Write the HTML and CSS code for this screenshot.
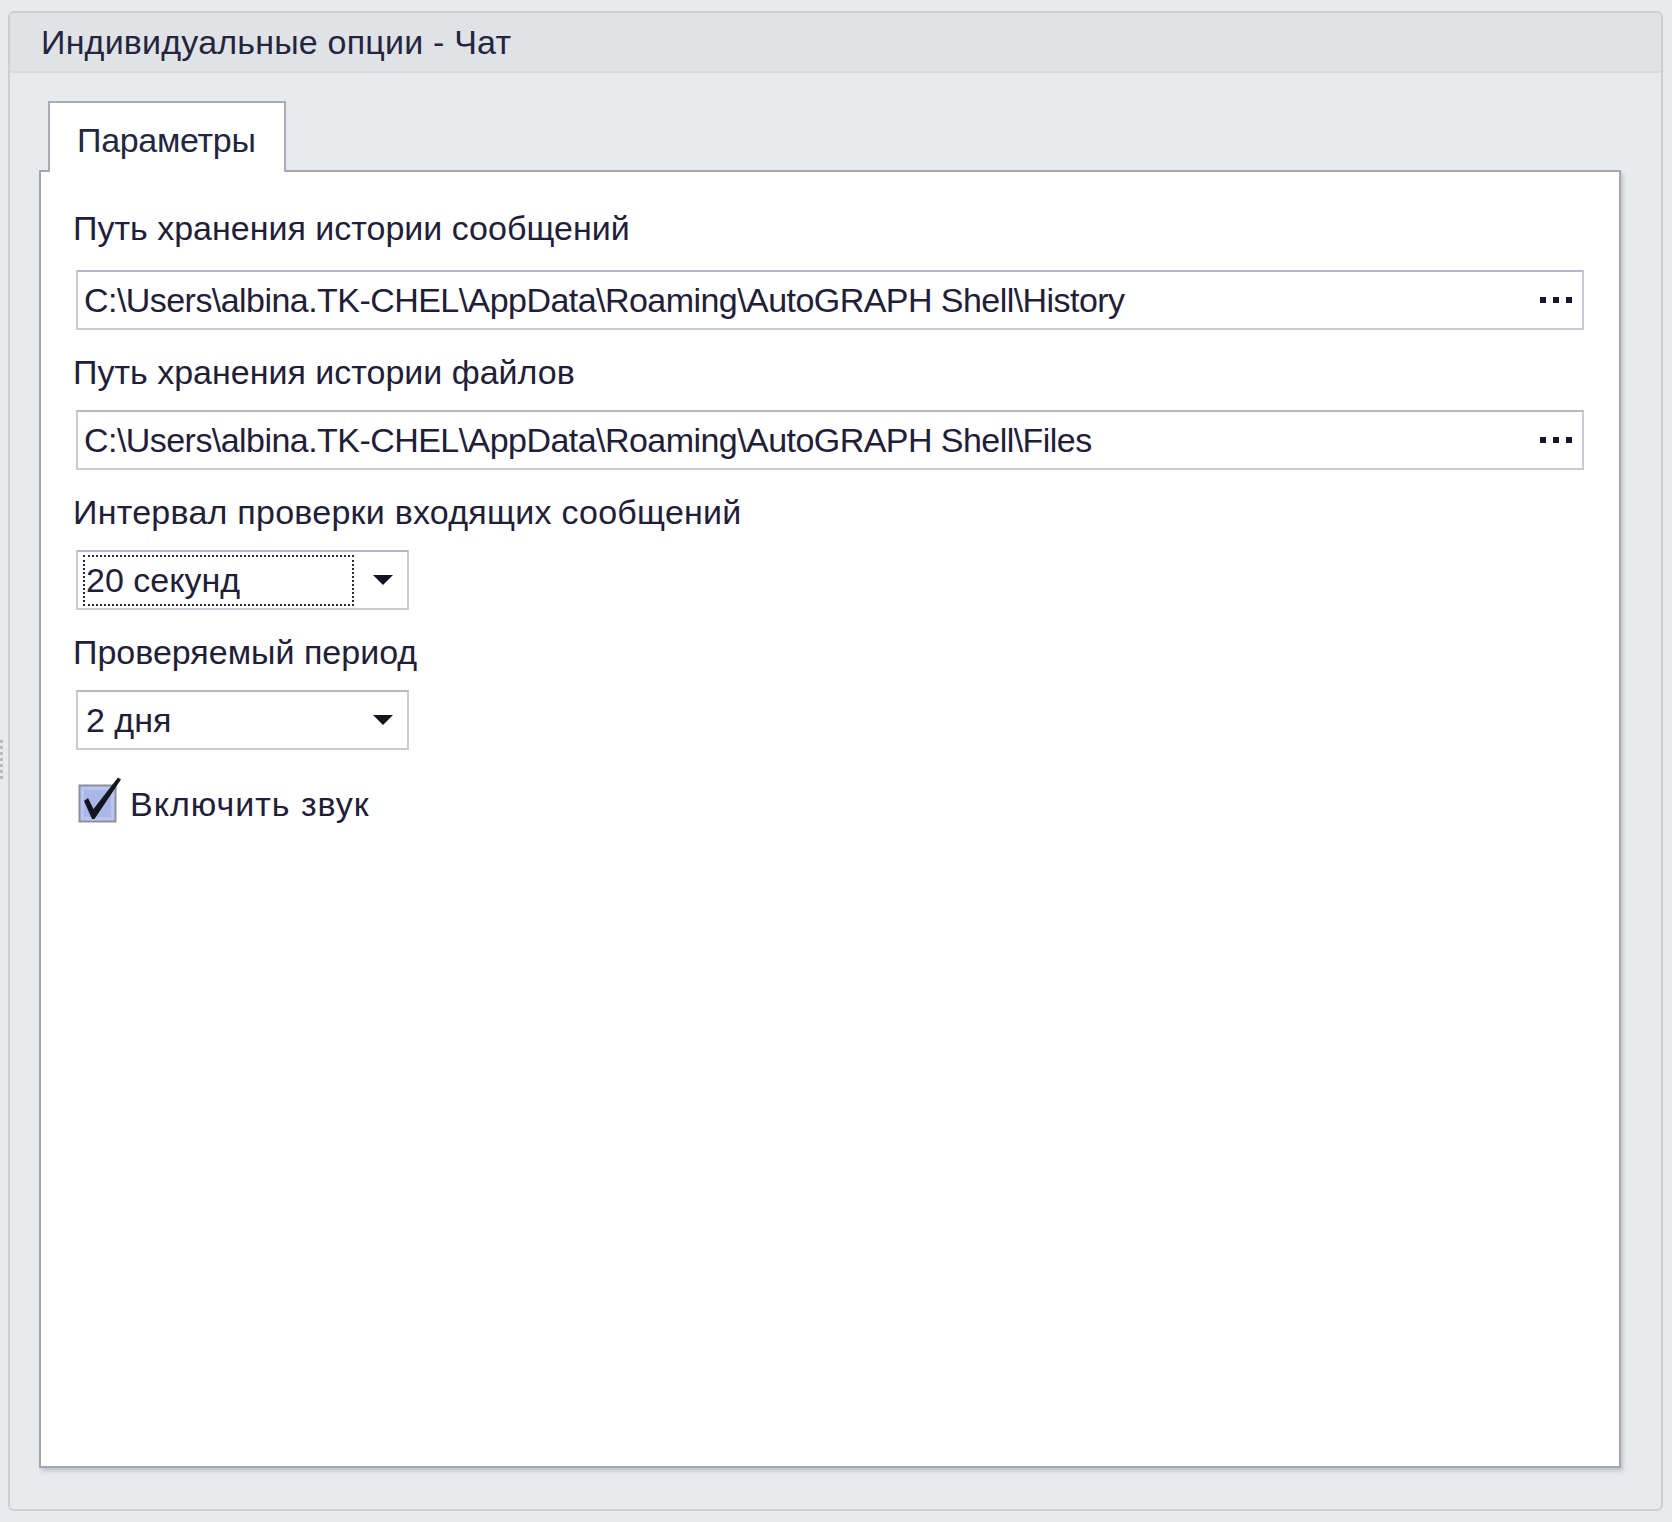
FILE: index.html
```html
<!DOCTYPE html>
<html lang="ru">
<head>
<meta charset="utf-8">
<title>Индивидуальные опции - Чат</title>
<link rel="stylesheet" href="styles.css">
</head>
<body>
<div class="page">
  <div class="grip"></div>
  <div class="frame">
    <div class="header"><span class="title">Индивидуальные опции - Чат</span></div>
    <div class="body">
      <div class="tabs"><div class="tab">Параметры</div></div>
      <div class="panel">
        <div class="field-label first">Путь хранения истории сообщений</div>
        <div class="input">
          <span class="value">C:\Users\albina.TK-CHEL\AppData\Roaming\AutoGRAPH Shell\History</span>
          <span class="dots"><i></i><i></i><i></i></span>
        </div>
        <div class="field-label">Путь хранения истории файлов</div>
        <div class="input">
          <span class="value">C:\Users\albina.TK-CHEL\AppData\Roaming\AutoGRAPH Shell\Files</span>
          <span class="dots"><i></i><i></i><i></i></span>
        </div>
        <div class="field-label wide">Интервал проверки входящих сообщений</div>
        <div class="combo">
          <span class="combo-value focused">20 секунд</span>
          <span class="arrow"></span>
        </div>
        <div class="field-label">Проверяемый период</div>
        <div class="combo">
          <span class="combo-value">2 дня</span>
          <span class="arrow"></span>
        </div>
        <div class="check">
          <svg class="box" width="46" height="48" viewBox="0 0 46 48">
            <rect x="2.5" y="9.5" width="36" height="36" fill="#b9c5ee" stroke="#8d909c" stroke-width="2"/>
            <rect x="7" y="14" width="27" height="27" fill="#a9b7e8"/>
            <path d="M7 25 L11 22 L16.5 33 L41 1.5 L44 3.5 L17.5 43 L15 43 Z" fill="#15151f"/>
          </svg>
          <span class="check-text">Включить звук</span>
        </div>
      </div>
    </div>
  </div>
</div>
</body>
</html>
```
FILE: styles.css
```css
* { box-sizing: border-box; }

html, body {
  margin: 0;
  padding: 0;
}

body {
  width: 1672px;
  height: 1522px;
  background: #e9eaee;
  font-family: "Liberation Sans", Arial, sans-serif;
  font-size: 34px;
  color: #1f2038;
  overflow: hidden;
}

.page {
  position: relative;
  height: 1522px;
  padding: 11px 9px 11px 8px;
}

.grip {
  position: absolute;
  left: 0;
  top: 740px;
  width: 3px;
  height: 40px;
  background: repeating-linear-gradient(to bottom, #b9bbc3 0 3px, transparent 3px 6px);
}

.frame {
  height: 100%;
  border: 2px solid #cdced5;
  border-radius: 6px;
  background: #e9eaee;
  display: flex;
  flex-direction: column;
  overflow: hidden;
}

.header {
  height: 60px;
  flex: none;
  background: #e1e2e6;
  border-bottom: 2px solid #d9dadf;
  display: flex;
  align-items: center;
  padding-left: 31px;
}

.title {
  color: #23263f;
  letter-spacing: 0.2px;
}

.body {
  flex: 1;
  display: flex;
  flex-direction: column;
  padding: 28px 40px 41px 29px;
}

.tabs {
  display: flex;
  padding-left: 9px;
  flex: none;
}

.tab {
  position: relative;
  z-index: 1;
  width: 238px;
  height: 71px;
  margin-bottom: -2px;
  background: #fff;
  border: 2px solid #a9abb5;
  border-bottom: none;
  padding: 17px 0 0 27px;
  line-height: 40px;
  color: #23263f;
  letter-spacing: -0.3px;
}

.panel {
  flex: 1;
  background: #fff;
  border: 2px solid #a3a5af;
  box-shadow: 2px 3px 4px rgba(120, 122, 135, 0.35);
  padding: 0 35px 0 32px;
  display: flex;
  flex-direction: column;
  align-items: flex-start;
}

.field-label {
  height: 40px;
  line-height: 40px;
  margin: 22px 0 18px;
  white-space: nowrap;
}

.field-label.first {
  margin-top: 36px;
  margin-bottom: 22px;
}

.field-label.wide {
  letter-spacing: 0.25px;
}

.input {
  align-self: stretch;
  margin-left: 3px;
  height: 60px;
  border: 2px solid #cbccd3;
  border-top-color: #b7b9c2;
  display: flex;
  align-items: center;
  padding: 0 10px 0 6px;
}

.input .value {
  flex: 1;
  white-space: nowrap;
  overflow: hidden;
  letter-spacing: -0.55px;
}

.dots {
  display: flex;
  gap: 7px;
}

.dots i {
  display: block;
  width: 6px;
  height: 6px;
  background: #17172a;
}

.combo {
  margin-left: 3px;
  width: 333px;
  height: 60px;
  border: 2px solid #cbccd3;
  border-top-color: #b7b9c2;
  display: flex;
  align-items: center;
  padding: 0 14px 0 5px;
}

.combo-value {
  width: 271px;
  height: 51px;
  display: flex;
  align-items: center;
  padding-left: 1px;
  border: 2px solid transparent;
  white-space: nowrap;
}

.combo-value.focused {
  border: 2px dotted #2a2a35;
}

.arrow {
  margin-left: auto;
  width: 0;
  height: 0;
  border-left: 10px solid transparent;
  border-right: 10px solid transparent;
  border-top: 10px solid #15151f;
}

.check {
  display: flex;
  align-items: flex-end;
  margin-top: 26px;
  margin-left: 4px;
}

.box {
  display: block;
  flex: none;
}

.check-text {
  margin-left: 7px;
  line-height: 40px;
  padding-bottom: 0;
  letter-spacing: 1px;
}
```
